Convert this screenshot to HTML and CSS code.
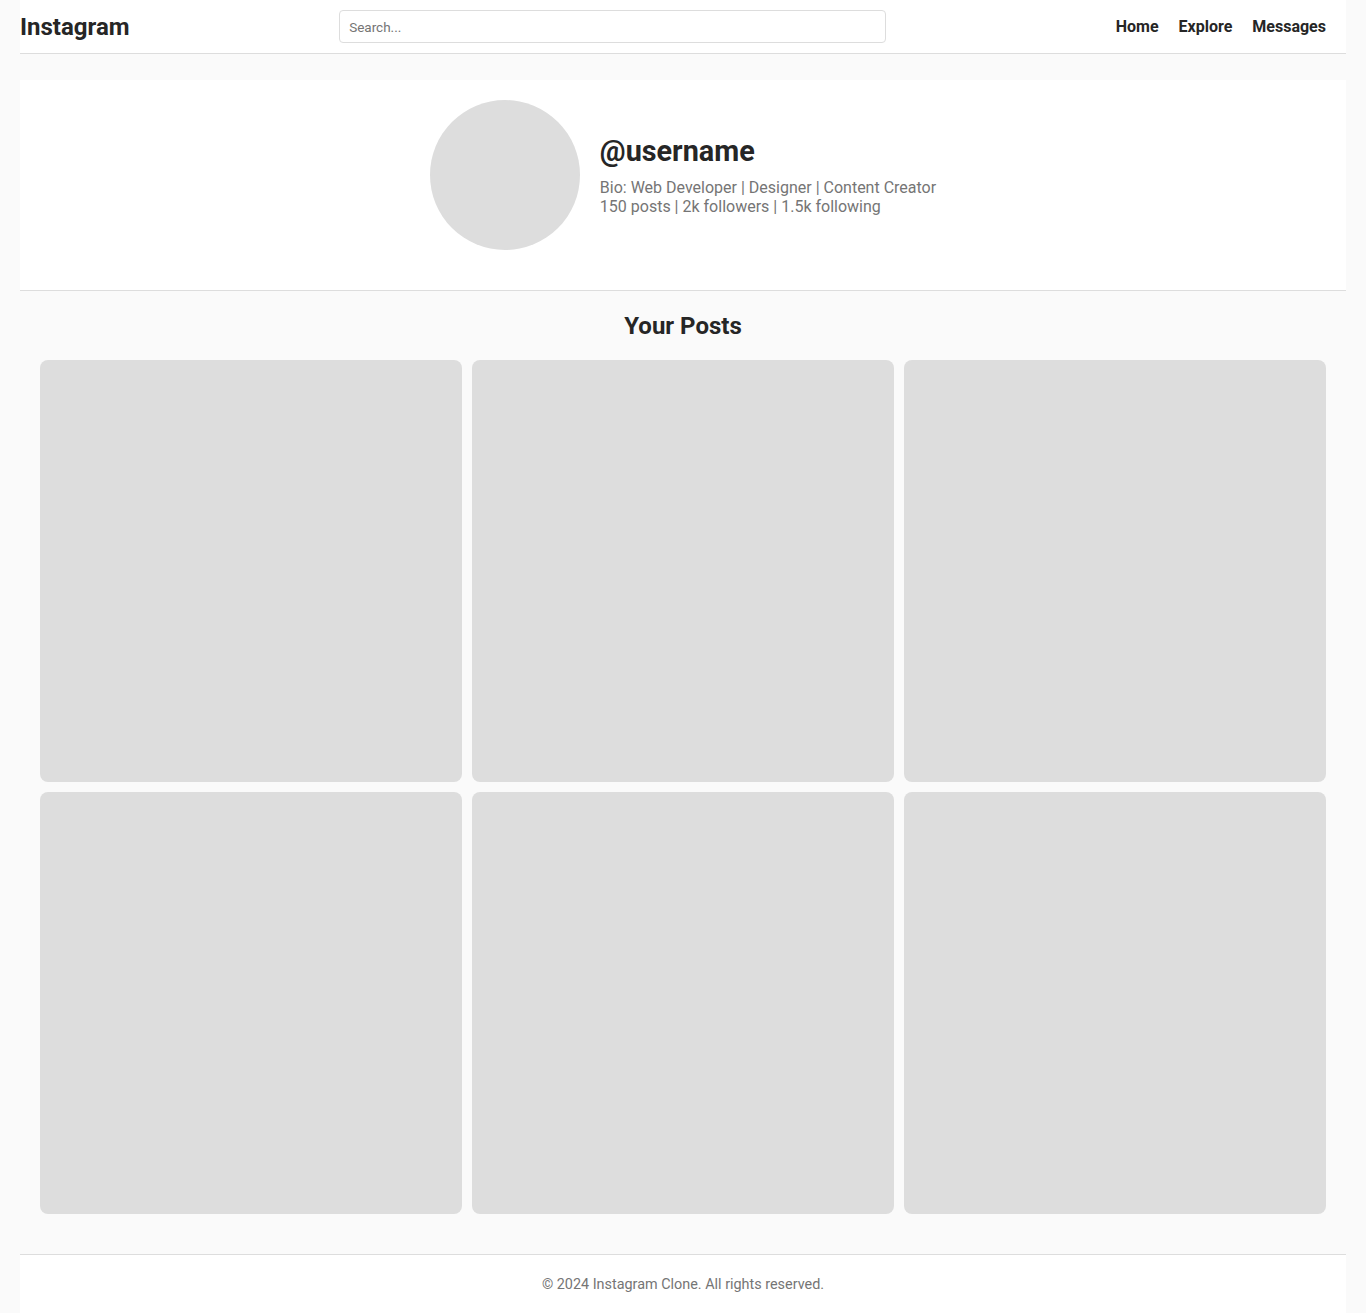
FILE: index.html
```
<html>
<head>
<meta charset="UTF-8">
<meta name="viewport" content="width=device-width, initial-scale=1.0">
<title>Instagram Clone</title>
<link rel="stylesheet" href="styles.css">
</head>
<body>
    <header class="header">
        <div class="logo">Instagram</div>
        <input class="search" type="text" placeholder="Search...">
        <nav class="nav">
            <a href="#">Home</a>
            <a href="#">Explore</a>
            <a href="#">Messages</a>
        </nav>
    </header>

    <section class="profile">
        <div class="avatar"></div>
        <div class="profile-info">
            <h2>@username</h2>
            <p>Bio: Web Developer | Designer | Content Creator</p>
            <p>150 posts | 2k followers | 1.5k following</p>
        </div>
    </section>

    <section class="posts">
        <h2>Your Posts</h2>
        <div class="grid">
            <div class="post"></div>
            <div class="post"></div>
            <div class="post"></div>
            <div class="post"></div>
            <div class="post"></div>
            <div class="post"></div>
        </div>
    </section>

    <footer class="footer">
        <p>&copy; 2024 Instagram Clone. All rights reserved.</p>
    </footer>
</body>
</html>
```
FILE: styles.css
```
* {
    box-sizing: border-box;
}
body {
    margin: 0;
    padding: 0 20px;
    background-color: #fafafa;
    font-family: Roboto, "Liberation Sans", Arial, sans-serif;
    color: #262626;
}
.header {
    display: flex;
    justify-content: space-between;
    align-items: center;
    height: 54px;
    padding: 10px 20px 10px 0;
    background-color: #fff;
    border-bottom: 1px solid #ddd;
}
.logo {
    font-size: 24px;
    font-weight: bold;
}
.search {
    width: 547px;
    height: 33px;
    padding: 0 9px;
    border: 1px solid #ddd;
    border-radius: 4px;
    font-family: inherit;
    font-size: 13.5px;
    color: #262626;
}
.search::placeholder {
    color: #757575;
}
.nav {
    display: flex;
    gap: 20px;
    padding-left: 20px;
}
.nav a {
    font-size: 16px;
    font-weight: bold;
    color: #262626;
    text-decoration: none;
}
.profile {
    display: flex;
    justify-content: center;
    align-items: center;
    gap: 20px;
    margin-top: 26px;
    padding: 20px 0 40px;
    background-color: #fff;
    border-bottom: 1px solid #ddd;
}
.avatar {
    width: 150px;
    height: 150px;
    border-radius: 50%;
    background-color: #ddd;
}
.profile-info h2 {
    margin: 0 0 10px;
    font-size: 28.8px;
}
.profile-info p {
    margin: 0;
    font-size: 16px;
    color: #757575;
}
.posts {
    padding: 21px 20px 20px;
}
.posts h2 {
    margin: 0 0 20px;
    text-align: center;
    font-size: 24px;
}
.grid {
    display: grid;
    grid-template-columns: repeat(3, 1fr);
    gap: 10px;
}
.post {
    aspect-ratio: 1 / 1;
    border-radius: 8px;
    background-color: #ddd;
}
.footer {
    margin-top: 20px;
    padding: 21px 20px 20px;
    background-color: #fff;
    border-top: 1px solid #ddd;
    text-align: center;
}
.footer p {
    margin: 0;
    font-size: 14.4px;
    color: #757575;
}
```
